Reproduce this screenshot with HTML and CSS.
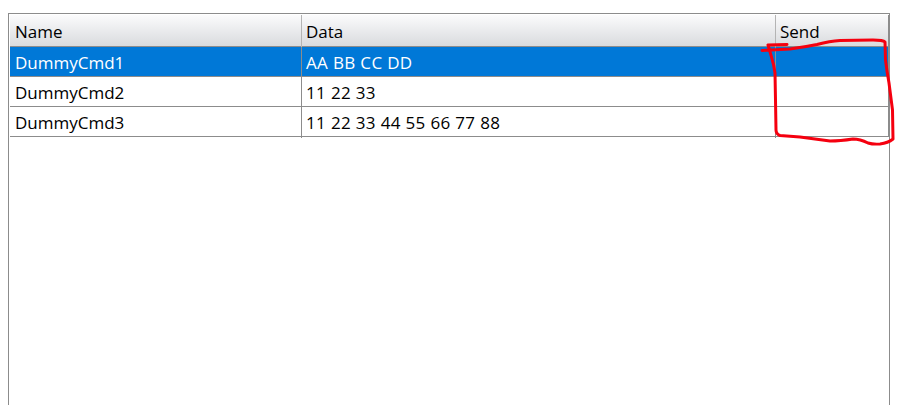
FILE: index.html
```html
<!DOCTYPE html>
<html lang="en">
<head>
  <meta charset="UTF-8">
  <title>Commands</title>
  <link rel="stylesheet" href="styles.css">
</head>
<body>
  <div class="frame">
    <div class="grid">
      <div class="row head">
        <div class="cell">Name</div>
        <div class="cell mid">Data</div>
        <div class="cell send">Send</div>
      </div>
      <div class="row selected">
        <div class="cell">DummyCmd1</div>
        <div class="cell mid data">AA BB CC DD</div>
        <div class="cell"></div>
      </div>
      <div class="row">
        <div class="cell">DummyCmd2</div>
        <div class="cell mid data">11 22 33</div>
        <div class="cell"></div>
      </div>
      <div class="row">
        <div class="cell">DummyCmd3</div>
        <div class="cell mid data">11 22 33 44 55 66 77 88</div>
        <div class="cell"></div>
      </div>
    </div>
  </div>
  <!-- red hand drawn mark over the Send column -->
  <svg class="scribble" width="898" height="405" viewBox="0 0 898 405">
    <path d="M762 50.5 L790 49 Q805 47 817 44.5 Q830 41 840 40.5 L873 40 Q883 40 885 42 L885.5 60 Q887 72 889 83 L892.5 110 L893 139 Q888 143 880 144 Q873 144.5 868 143 Q860 139 853 139 Q840 141 830 141 L800 137 L780 135.5 Q776 134 776 130 L775.5 100 L775 73 Q774 65 771.5 57 L768 45 L787 44.5"/>
  </svg>
</body>
</html>
```

FILE: styles.css
```css
html, body {
  margin: 0;
  padding: 0;
  height: 100%;
  overflow: hidden;
  background: #fff;
}
body {
  font-family: "Open Sans", "Noto Sans", sans-serif;
  font-size: 17px;
  color: #000;
  padding: 13px 8px 0 8px;
  box-sizing: border-box;
}
.frame {
  width: 882px;
  height: 100%;
  box-sizing: border-box;
  border: 1px solid #8c8c8c;
  border-bottom: none;
  padding: 1px 1px 0 1px;
}
.grid {
  width: 878px;
  border-right: 1px solid #8c8c8c;
}
.row {
  display: grid;
  grid-template-columns: 292px 474px 1fr;
  height: 29px;
  border-bottom: 1px solid #8c8c8c;
}
.cell {
  padding-left: 5px;
  line-height: 31px;
  white-space: nowrap;
  border-right: 1px solid #8c8c8c;
  box-sizing: border-box;
}
.cell:last-child {
  border-right: none;
}
.mid {
  padding-left: 4px;
}
.data {
  letter-spacing: 0.34px;
}
.head {
  height: 31px;
  background: linear-gradient(#fbfbfc, #d9dbde);
}
.head .cell {
  line-height: 33px;
  border-right-color: #b4b4b4;
}
.head .send {
  padding-left: 4px;
}
.selected {
  background: #0078d7;
  color: #fff;
}
.scribble {
  position: absolute;
  top: 0;
  left: 0;
  pointer-events: none;
}
.scribble path {
  fill: none;
  stroke: #f5000f;
  stroke-width: 3;
  stroke-linecap: round;
  stroke-linejoin: round;
}
```
